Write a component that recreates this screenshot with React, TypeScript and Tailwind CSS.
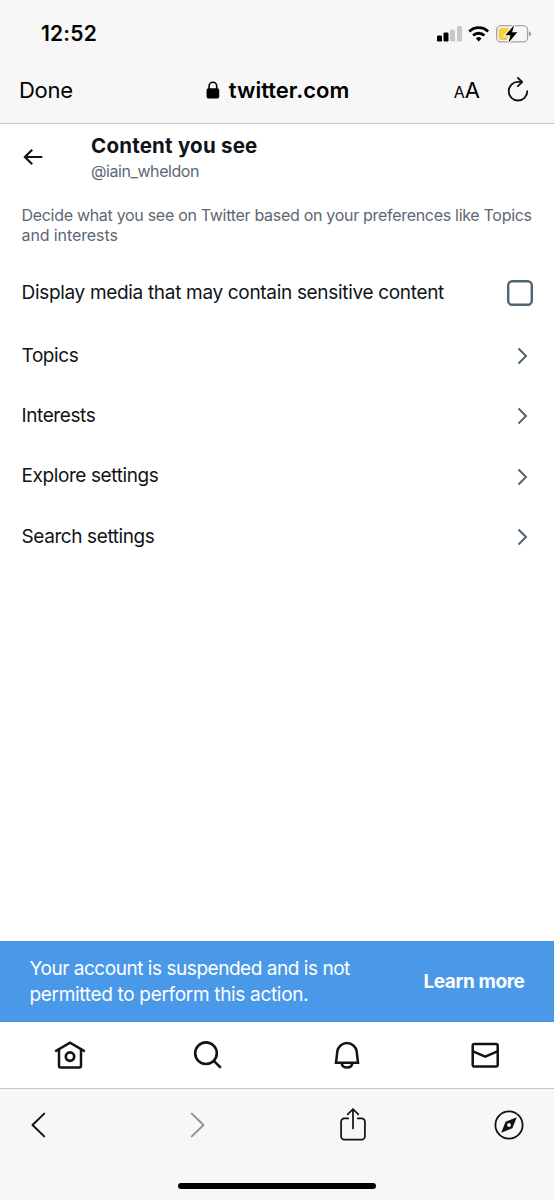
const settings = ['Topics', 'Interests', 'Explore settings', 'Search settings']

function StatusIcons() {
  return (
    <svg width="96" height="22" viewBox="436 22.5 96 22" fill="none" aria-hidden>
      <rect x="437" y="35" width="5" height="6" rx="1.3" fill="#000" />
      <rect x="443.5" y="32" width="5" height="9" rx="1.3" fill="#000" />
      <rect x="450" y="29" width="5" height="12" rx="1.3" fill="#c8c8c8" />
      <rect x="457" y="25.5" width="5" height="15.5" rx="1.3" fill="#c8c8c8" />
      <g stroke="#000" strokeWidth="2.9">
        <path d="M469.3 31a13.3 13.3 0 0 1 18.8 0" />
        <path d="M473.1 35a8 8 0 0 1 11.2 0" />
      </g>
      <path d="M475.9 37.9a4 4 0 0 1 5.6 0l-2.8 3z" fill="#000" />
      <rect x="496.6" y="25.2" width="31" height="16.2" rx="4.5" stroke="#a2a2a2" strokeWidth="1.3" />
      <path d="M501.5 27.2h9l-5.3 8h3.4l-1.6 4.4h-5.5a3 3 0 0 1-3-3v-6.4a3 3 0 0 1 3-3z" fill="#f7ce46" />
      <path
        d="M514.2 24.4l-8.8 10.3h5.1l-2.1 7.5 8.9-10.4h-5.2z"
        fill="#000"
        stroke="#f7f7f7"
        strokeWidth="2.4"
        paintOrder="stroke"
      />
      <path d="M529.2 31v4.6c1.1-.4 1.7-1.2 1.7-2.3s-.6-1.9-1.7-2.3z" fill="#858585" />
    </svg>
  )
}

function BrowserHeader() {
  return (
    <header className="h-[124px] border-b border-[#c5c5c5] bg-[#f7f7f7] text-black">
      <div className="flex h-[67px] items-center justify-between pl-[41px] pr-[22px]">
        <span className="text-[21px] font-semibold tracking-[0.2px]">12:52</span>
        <StatusIcons />
      </div>
      <div className="grid h-[46px] grid-cols-[1fr_auto_1fr] items-center pl-[19px] pr-[25px] text-[22px]">
        <span className="tracking-[-0.3px]">Done</span>
        <div className="flex items-center gap-[9px] pl-[7px]">
          <svg width="14" height="18" viewBox="0 0 14 18" fill="none" aria-hidden>
            <rect x=".6" y="7.2" width="12.6" height="10.4" rx="1.8" fill="#000" />
            <path d="M3.1 8V5a3.8 3.8 0 0 1 7.6 0v3" stroke="#000" strokeWidth="1.6" />
          </svg>
          <span className="font-semibold">twitter.com</span>
        </div>
        <div className="flex items-center justify-end gap-[27px]">
          <span className="flex items-baseline">
            <span className="text-[16px]">A</span>
            <span className="text-[22px]">A</span>
          </span>
          <svg width="22" height="26" viewBox="0 0 22 26" fill="none" stroke="#111" strokeWidth="1.8" strokeLinecap="round" strokeLinejoin="round" aria-hidden>
            <path d="M20.3 14.2a9.3 9.3 0 1 1-9.3-9.3h3.8" />
            <path d="M10.9.9l4.2 4.1-4.2 4.2" />
          </svg>
        </div>
      </div>
    </header>
  )
}

function SettingsPage() {
  return (
    <main className="flex-1 px-[21.5px] text-[#0f1419]">
      <div className="flex h-[70px] items-center">
        <svg className="-mt-1 ml-[1.5px]" width="20" height="18" viewBox="0 0 20 18" fill="none" stroke="#0f1419" strokeWidth="2.2" aria-hidden>
          <path d="M19.3 9H2.2M9.2 1.7L1.9 9l7.3 7.3" />
        </svg>
        <div className="ml-[48px]">
          <h1 className="mt-[-1px] text-[20.5px] font-bold leading-[26px] tracking-[0.22px]">Content you see</h1>
          <p className="text-[16px] leading-[25px] tracking-[-0.42px] text-[#5b6873]">@iain_wheldon</p>
        </div>
      </div>
      <p className="mt-[11px] text-[16px] leading-[20px] tracking-[-0.3px] text-[#5b6873]">
        Decide what you see on Twitter based on your preferences like Topics
        <br />
        <span className="tracking-[-0.1px]">and interests</span>
      </p>
      <label className="mt-[17px] flex h-[63px] items-center justify-between text-[19px] tracking-[-0.32px]">
        Display media that may contain sensitive content
        <svg className="-mt-[2px]" width="26" height="26" viewBox="0 0 26 26" fill="none" aria-hidden>
          <rect x="1.2" y="1.2" width="23.6" height="23.6" rx="4" stroke="#536471" strokeWidth="2.4" />
        </svg>
      </label>
      <ul className="mt-px">
        {settings.map((label) => (
          <li key={label} className="flex h-[60.3px] items-center justify-between text-[19px] tracking-[-0.4px]">
            {label}
            <svg className="mr-[5px]" width="11" height="18" viewBox="0 0 11 18" fill="none" stroke="#536471" strokeWidth="2" aria-hidden>
              <path d="M1.5 1.5L9 9l-7.5 7.5" />
            </svg>
          </li>
        ))}
      </ul>
    </main>
  )
}

function SuspendedBanner() {
  return (
    <div className="flex h-[80.5px] items-center justify-between bg-[#4a99e9] px-[29.5px] text-[19px] text-white">
      <p className="mt-px leading-[25.5px] tracking-[-0.32px]">
        <span className="tracking-[-0.46px]">Your account is suspended and is not</span>
        <br />
        permitted to perform this action.
      </p>
      <button type="button" className="mt-px font-bold tracking-[-0.4px]">
        Learn more
      </button>
    </div>
  )
}

function TabBar() {
  return (
    <nav className="grid h-[66.5px] grid-cols-4 place-items-center text-[#0f1419]">
      <svg className="ml-px" width="32" height="30" viewBox="0 0 32 30" fill="none" stroke="currentColor" strokeWidth="2.5" aria-hidden>
        <path d="M1.2 11.4L16 2.7l14.8 8.7" />
        <path d="M5 9.5v16.3c0 .9.7 1.6 1.6 1.6h18.8c.9 0 1.6-.7 1.6-1.6V9.5" />
        <circle cx="16" cy="16.6" r="4.2" strokeWidth="2.7" />
      </svg>
      <svg width="30" height="30" viewBox="0 0 30 30" fill="none" stroke="currentColor" strokeWidth="2.6" aria-hidden>
        <circle cx="13" cy="13.2" r="10.8" />
        <path d="M20.5 20.6l7.3 7.2" />
      </svg>
      <svg className="ml-[2px]" width="28" height="30" viewBox="0 0 28 30" fill="none" stroke="currentColor" strokeWidth="2.5" aria-hidden>
        <path d="M3 22.7l1.3-11.2a9.8 9.8 0 0 1 19.4 0L25 22.7z" />
        <path d="M8.5 23a5.6 5.6 0 0 0 11 0" />
      </svg>
      <svg width="30" height="30" viewBox="0 0 30 30" fill="none" stroke="currentColor" strokeWidth="2.5" aria-hidden>
        <rect x="2.7" y="4" width="25" height="22.6" rx="1.8" />
        <path d="M3 11.4l12.2 5.2 12.2-5.2" />
      </svg>
    </nav>
  )
}

function BrowserToolbar() {
  return (
    <footer className="flex h-[112px] flex-col border-t border-[#c5c5c5] bg-[#f7f7f7]">
      <div className="flex h-[72px] items-center pl-[31px]">
        <svg width="15" height="26" viewBox="0 0 15 26" fill="none" stroke="#111" strokeWidth="2" strokeLinecap="round" strokeLinejoin="round" aria-hidden>
          <path d="M13.2 1.6L1.5 13l11.7 11.4" />
        </svg>
        <svg className="ml-[144px]" width="15" height="26" viewBox="0 0 15 26" fill="none" stroke="#929292" strokeWidth="2" strokeLinecap="round" strokeLinejoin="round" aria-hidden>
          <path d="M1.8 1.6L13.5 13 1.8 24.4" />
        </svg>
        <svg className="-mt-[3px] ml-[135px]" width="26" height="34" viewBox="0 0 26 34" fill="none" stroke="#111" strokeWidth="1.7" strokeLinecap="round" strokeLinejoin="round" aria-hidden>
          <path d="M8.2 11.4H4.4a3.3 3.3 0 0 0-3.3 3.3v14.7a3.3 3.3 0 0 0 3.3 3.3h17.2a3.3 3.3 0 0 0 3.3-3.3V14.7a3.3 3.3 0 0 0-3.3-3.3h-3.8" />
          <path d="M13 21.5V2M7.7 7.3L13 2l5.3 5.3" />
        </svg>
        <svg className="ml-[128px]" width="30" height="30" viewBox="0 0 30 30" fill="none" aria-hidden>
          <circle cx="15" cy="15" r="13.6" stroke="#111" strokeWidth="1.8" />
          <path d="M22.8 7.2l-4.4 11-11.2 4.6 4.4-11z" fill="#111" />
          <circle cx="15" cy="15" r="1.9" fill="#f7f7f7" />
        </svg>
      </div>
      <div className="mx-auto mt-[21.5px] h-[6.5px] w-[198px] rounded-full bg-black" />
    </footer>
  )
}

export default function App() {
  return (
    <div className="flex h-[1200px] w-[554px] flex-col overflow-hidden bg-white font-['Inter',sans-serif]">
      <BrowserHeader />
      <SettingsPage />
      <SuspendedBanner />
      <TabBar />
      <BrowserToolbar />
    </div>
  )
}
